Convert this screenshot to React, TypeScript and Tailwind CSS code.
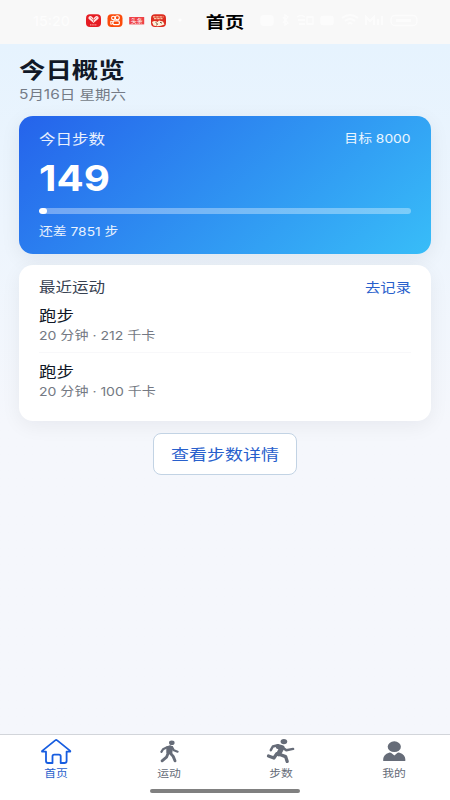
import React from "react";

type TextProps = { className: string; children: React.ReactNode };

/* Wide-set text: the glyphs are broader than they are tall. */
function Wide({ className, children }: TextProps) {
  return <span className={`block w-max whitespace-nowrap ${className}`}>{children}</span>;
}

function StatusIcons() {
  return (
    <svg className="absolute left-0 top-0 h-11 w-[450px]" viewBox="0 0 450 44" fill="none">
      <text x="33" y="25.5" fontSize="13" fontWeight="500" fill="#fff" opacity=".75" textLength="37" lengthAdjust="spacingAndGlyphs">15:20</text>
      <g>
        <rect x="86" y="14.2" width="15" height="12.8" rx="4" fill="#e51c23" />
        <path d="M93.5 23 L88.5 18.8 Q88 15.8 91 16 L93.5 18.2 L96 16 Q99.2 15.8 98.5 18.8 Z" fill="#ffe1df" />
        <path d="M90.5 17.5l3 3 3-3M93.5 18v4" stroke="#e86865" strokeWidth=".8" />
        <path d="M90 24.9h7" stroke="#ffb4b0" strokeWidth="1" strokeDasharray="1.5 .7" />
      </g>
      <g>
        <rect x="107.5" y="14.2" width="15" height="12.8" rx="4" fill="#fb4b0b" />
        <circle cx="113.3" cy="18" r="1.7" stroke="#fff" strokeWidth="1.1" />
        <circle cx="117.3" cy="17.8" r="2" stroke="#fff" strokeWidth="1.1" />
        <rect x="113" y="20.8" width="6.3" height="3.9" rx="1.3" stroke="#fff" strokeWidth="1.2" />
        <path d="M113 22l-2.2-1v3.4l2.2-1" stroke="#fff" strokeWidth="1" />
      </g>
      <g>
        <rect x="129.2" y="17" width="15" height="7.4" fill="#ee4146" />
        <text x="130.7" y="22.9" fontSize="6" fontWeight="400" fill="#fff" textLength="12" lengthAdjust="spacingAndGlyphs">头条</text>
      </g>
      <g>
        <rect x="151" y="14.2" width="15" height="12.8" rx="4" fill="#dd2d20" />
        <path d="M153 16.9h10.5M154 18.7h8.5" stroke="#f9c6a4" strokeWidth="1.2" strokeDasharray="2.5 .7" />
        <path d="M152 22q3-2 5.5 0l1.5-1.5 4 1 1.5 3q-6 2.8-11 1z" fill="#fff3dc" />
        <path d="M155.5 22.3l2 1.5-1 1.6M160 22.2l2 1" stroke="#76462f" strokeWidth="1" />
      </g>
      <circle cx="180" cy="20" r="1.6" fill="#fff" />
      <g stroke="#fff" strokeWidth="1.3" opacity=".7">
        <rect x="261" y="16" width="12" height="9" rx="2" fill="#fff" />
        <path d="M283 17l5 6-3 2V15l3 2-5 6" />
        <path d="M297 17q4-3 8 0M298 20h7M299 24h6M307 17h6v7h-6z" />
        <rect x="321" y="16.5" width="12" height="8" rx="1.5" fill="#fff" />
        <path d="M342 18q8-6 16 0M345 21q5-4 10 0M348 24q2-2 4 0" strokeWidth="2" />
        <path d="M366 25v-8l4 4 4-4v8M378 25v-6M382 25V16" strokeWidth="2" />
        <rect x="391" y="15.5" width="26" height="10" rx="4" />
        <path d="M396 20.5h15" strokeWidth="3" />
      </g>
    </svg>
  );
}

function Workout({ detail }: { detail: string }) {
  return (
    <div>
      <Wide className="origin-left scale-x-[1.17] text-[15px] leading-5 text-[#111827]">跑步</Wide>
      <Wide className="origin-left scale-x-[1.17] pt-px text-[12px] leading-[18px] text-[#747983]">{detail}</Wide>
    </div>
  );
}

function HomeIcon() {
  return (
    <svg className="h-8 w-8" viewBox="0 0 32 32" fill="none" stroke="#175de0" strokeWidth="1.8" strokeLinejoin="round">
      <path d="M15.2 4.4 Q16.2 3.5 17.2 4.4 L30.2 14.9 Q30.6 15.7 29.7 15.7 H26.6 V25 Q26.6 27 24.5 27 H20.7 V20.3 Q20.7 18.6 19 18.6 H14.2 Q12.5 18.6 12.5 20.3 V27 H8 Q6 27 6 25 V15.7 H2.6 Q1.6 15.7 2.2 14.9 Z" />
    </svg>
  );
}

function WalkIcon() {
  return (
    <svg className="h-8 w-8" viewBox="0 0 32 32" fill="none" stroke="#666c78" strokeLinecap="round" strokeLinejoin="round">
      <ellipse cx="18.8" cy="6.8" rx="2.8" ry="2.3" fill="#666c78" stroke="none" />
      <path d="M14.2 11.3l2.8-1.1 2.2.9-.8 6-4.2-.6z" fill="#666c78" strokeWidth="1.8" />
      <path d="M14.6 11.1l-4.6 2.2-1.6 2.5M19 11.1l1.8 3.2 3.8 1.4" strokeWidth="2.2" />
      <path d="M15.2 17l-1.7 4.2-4.4 3.6M17.2 17l3 3.4 1.8 4.4" strokeWidth="2.9" />
    </svg>
  );
}

function RunIcon() {
  return (
    <svg className="h-8 w-8" viewBox="0 0 32 32" fill="none" stroke="#666c78" strokeLinecap="round" strokeLinejoin="round">
      <ellipse cx="18.9" cy="5.6" rx="3.3" ry="2.6" fill="#666c78" stroke="none" />
      <path d="M13.4 10.6l3.6 1-3.3 6.2" strokeWidth="5" />
      <path d="M12.8 9.2l-5 1.3-2 3.6M17.5 11.4l3.8 2.9 6.8-1.4" strokeWidth="2.5" />
      <path d="M11.8 17.8l-2.9 4.2-5.4-2M14.2 18.2l6.4 2.4 1.6 4.8" strokeWidth="3.3" />
    </svg>
  );
}

function PersonIcon() {
  return (
    <svg className="h-8 w-8" viewBox="0 0 32 32" fill="#666c78">
      <ellipse cx="16.3" cy="10.7" rx="6.6" ry="5.4" />
      <path d="M5.2 24.9v-1.8q.3-4.5 5.8-6.4 1.5-.4 2.6.5l2.8 2.4 2.6-2.4q1.1-.9 2.6-.5 5.4 1.9 5.7 6.4v1.8z" />
    </svg>
  );
}

const tabs = [
  { label: "首页", icon: <HomeIcon />, color: "text-[#2860cc]" },
  { label: "运动", icon: <WalkIcon />, color: "text-[#666c78]" },
  { label: "步数", icon: <RunIcon />, color: "text-[#666c78]" },
  { label: "我的", icon: <PersonIcon />, color: "text-[#666c78]" },
];

export default function App() {
  return (
    <div className="flex h-[800px] w-[450px] flex-col overflow-hidden bg-[#f5f7fc] font-['Inter','Noto_Sans_CJK_SC',sans-serif]">
      <header className="relative flex h-11 shrink-0 items-center justify-center bg-[#f8f8f8]">
        <StatusIcons />
        <Wide className="scale-x-[1.2] text-[16px] font-bold leading-[44px] text-black">首页</Wide>
      </header>

      <main className="flex flex-1 flex-col bg-linear-to-b from-[#e6f3fe] to-[#f5f7fc] to-55% px-[19px] pt-3">
        <Wide className="origin-left scale-x-[1.2] text-[22px] font-bold leading-7 text-[#111827]">今日概览</Wide>
        <Wide className="origin-left scale-x-[1.19] text-[13px] leading-[21px] text-[#747b86]">5月16日 星期六</Wide>

        <section className="mt-[11px] flex h-[138px] shrink-0 flex-col rounded-[14px] bg-linear-[139deg] from-[#2563eb] to-[#38bdf8] px-5 pt-3 text-white shadow-[0_5px_20px_rgba(15,23,42,0.07)]">
          <div className="flex h-[22px] items-center justify-between">
            <Wide className="origin-left scale-x-[1.18] text-[14px] leading-[22px] text-white/90">今日步数</Wide>
            <Wide className="origin-right scale-x-[1.15] text-[12px] leading-[22px] text-white/90">目标 8000</Wide>
          </div>
          <Wide className="mt-2 origin-left scale-x-[1.12] text-[36px] font-bold leading-10">149</Wide>
          <div className="mt-[10px] h-1.5 shrink-0 overflow-hidden rounded-full bg-white/35">
            <div className="h-full w-2 rounded-full bg-white" />
          </div>
          <Wide className="mt-2 origin-left scale-x-[1.15] text-[12px] leading-5 text-white/90">还差 7851 步</Wide>
        </section>

        <section className="mt-[11px] h-[156px] shrink-0 rounded-[14px] bg-white px-5 pt-[11px] shadow-[0_5px_20px_rgba(15,23,42,0.06)]">
          <div className="flex h-[22px] items-center justify-between">
            <Wide className="origin-left scale-x-[1.18] text-[14px] leading-[22px] text-[#374151]">最近运动</Wide>
            <Wide className="origin-right scale-x-[1.18] text-[13px] leading-[22px] text-[#2860cc]">去记录</Wide>
          </div>
          <div className="pt-2">
            <div className="h-[47px] border-b border-[#f8f8fa]">
              <Workout detail="20 分钟 · 212 千卡" />
            </div>
            <div className="pt-[9px]">
              <Workout detail="20 分钟 · 100 千卡" />
            </div>
          </div>
        </section>

        <button className="mt-3 flex h-[42px] w-36 shrink-0 items-center justify-center self-center rounded-lg border border-[#c2d3e4] bg-white pt-0.5">
          <Wide className="scale-x-[1.2] text-[15px] leading-5 text-[#2860cc]">查看步数详情</Wide>
        </button>
      </main>

      <footer className="flex h-[66px] shrink-0 flex-col border-t border-[#d2d5da] bg-white">
        <nav className="grid h-[54px] shrink-0 grid-cols-4 pt-px">
          {tabs.map((tab) => (
            <div key={tab.label} className="flex flex-col items-center">
              {tab.icon}
              <Wide className={`scale-x-[1.18] text-[10px] leading-[11px] ${tab.color}`}>{tab.label}</Wide>
            </div>
          ))}
        </nav>
        <div className="h-1 w-[150px] shrink-0 self-center rounded-full bg-[#808080]" />
      </footer>
    </div>
  );
}
